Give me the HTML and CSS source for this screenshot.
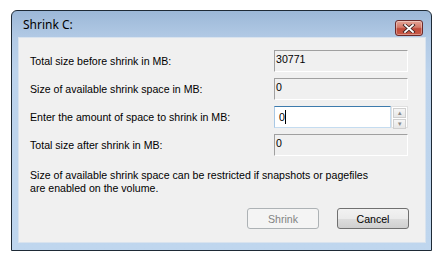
FILE: index.html
```html
<!DOCTYPE html>
<html lang="en">

<head>
    <meta charset="UTF-8">
    <title>Shrink C:</title>
    <link rel="stylesheet" href="styles.css">
</head>

<body>
    <div class="window">
        <div class="titlebar">
            <span class="title">Shrink C:</span>
            <button class="close" type="button" aria-label="Close">
                <svg width="14" height="9" viewBox="0 0 14 9">
                    <path d="M3 1 L11 8 M11 1 L3 8" stroke="#3a2020" stroke-width="3.4" stroke-linecap="square" />
                    <path d="M3 1 L11 8 M11 1 L3 8" stroke="#ffffff" stroke-width="1.8" stroke-linecap="square" />
                </svg>
            </button>
        </div>
        <div class="panel">
            <div class="form">
                <label>Total size before shrink in MB:</label>
                <div class="field">30771</div>

                <label>Size of available shrink space in MB:</label>
                <div class="field">0</div>

                <label for="amount">Enter the amount of space to shrink in MB:</label>
                <div class="spin">
                    <div class="edit"><span>0</span><span class="caret"></span></div>
                    <div class="arrows">
                        <div class="arrow">&#9652;</div>
                        <div class="arrow">&#9662;</div>
                    </div>
                </div>

                <label>Total size after shrink in MB:</label>
                <div class="field">0</div>
            </div>
            <p class="note">Size of available shrink space can be restricted if snapshots or pagefiles<br>are enabled on the volume.</p>
            <div class="buttons">
                <button class="btn" type="button" disabled>Shrink</button>
                <button class="btn" type="button">Cancel</button>
            </div>
        </div>
    </div>
</body>

</html>
```

FILE: styles.css
```css
body {
    margin: 0;
    background: #ffffff;
    font-family: "Liberation Sans", Arial, sans-serif;
    font-size: 10.6px;
    color: #000000;
}

.window {
    box-sizing: border-box;
    width: 421px;
    height: 241px;
    margin: 10px 0 0 11px;
    padding: 0 6px 7px 7px;
    border: 1px solid #1e2a36;
    border-radius: 6px 6px 0 0;
    background: linear-gradient(#9cb8d8, #b2cae5 27px, #bcd3ec 60px, #bfd6ee);
    box-shadow: 0 1px 0 #56d4ee;
}

.titlebar {
    height: 27px;
    display: flex;
    align-items: flex-start;
    justify-content: space-between;
}

.title {
    font-family: "Noto Sans", sans-serif;
    font-size: 12px;
    padding: 5px 0 0 4px;
    color: #000000;
}

.close {
    width: 28px;
    height: 16px;
    margin: 9px 2px 0 0;
    padding: 0;
    border: 1px solid #6b2a2a;
    border-radius: 3px;
    background: linear-gradient(#e5a597, #d47a6a 45%, #c04a3a 55%, #c85a48);
    box-shadow: inset 0 0 0 1px rgba(255, 255, 255, 0.35);
    display: flex;
    align-items: center;
    justify-content: center;
}

.panel {
    height: 204px;
    background: #f0f0f0;
    box-shadow: 0 0 0 1px #d9e3ee;
}

.form {
    display: grid;
    grid-template-columns: 244px 134px;
    grid-auto-rows: 28px;
    align-items: center;
    padding: 9px 0 0 11px;
}

.field {
    box-sizing: border-box;
    height: 22px;
    padding: 2px 0 0 1px;
    border-top: 1px solid #a0a0a0;
    border-left: 1px solid #a0a0a0;
    border-right: 1px solid #ffffff;
    border-bottom: 1px solid #ffffff;
}

.spin {
    display: flex;
    height: 22px;
}

.edit {
    box-sizing: border-box;
    width: 117px;
    height: 22px;
    padding: 4px 0 0 4px;
    background: #ffffff;
    border: 1px solid #c5dcf0;
    border-top-color: #3d7bad;
    border-left-color: #a9c8e4;
    display: flex;
    align-items: flex-start;
}

.caret {
    width: 1px;
    height: 14px;
    margin-top: -1px;
    background: #000000;
}

.arrows {
    box-sizing: border-box;
    width: 17px;
    height: 22px;
    padding: 1px;
    border: 1px solid #e0e0e0;
    background: #ffffff;
    display: flex;
    flex-direction: column;
    gap: 1px;
}

.arrow {
    flex: 1;
    border: 1px solid #cfcfcf;
    background: linear-gradient(#f6f6f6, #e6e6e6);
    color: #8a8a8a;
    font-size: 7px;
    line-height: 8px;
    text-align: center;
}

.note {
    margin: 10px 0 0 11px;
    line-height: 13px;
}

.buttons {
    display: flex;
    justify-content: flex-end;
    gap: 18px;
    margin-top: 13px;
    padding-right: 16px;
}

.btn {
    width: 72px;
    height: 21px;
    padding: 0;
    border: 1px solid #707070;
    border-radius: 3px;
    background: linear-gradient(#f2f2f2, #ebebeb 50%, #dddddd 51%, #cfcfcf);
    font-family: "Liberation Sans", Arial, sans-serif;
    font-size: 10.6px;
    color: #000000;
}

.btn:disabled {
    border-color: #adb2b5;
    background: #f4f4f4;
    color: #838383;
}
```
